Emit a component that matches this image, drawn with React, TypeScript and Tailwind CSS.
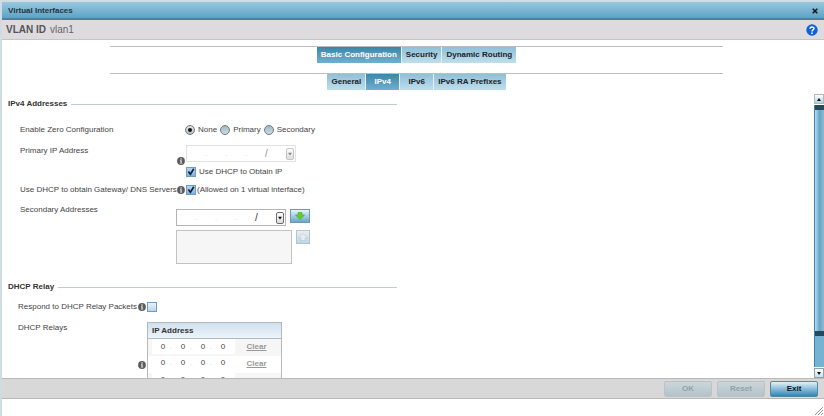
import React from 'react';

const MAIN_TABS = ['Basic Configuration', 'Security', 'Dynamic Routing'];
const SUB_TABS = ['General', 'IPv4', 'IPv6', 'IPv6 RA Prefixes'];
const ZERO_CONFIG = ['None', 'Primary', 'Secondary'];
const RELAYS = [1, 2, 3, 4];
const OCTETS = [1, 2, 3, 4];

const InfoIcon: React.FC = () => (
  <svg viewBox="0 0 8 8" className="h-2 w-2 shrink-0" aria-hidden="true">
    <circle cx="4" cy="4" r="3.9" fill="#5c5c5c" />
    <rect x="3.4" y="1.4" width="1.3" height="1.2" fill="#f4f4f4" />
    <path d="M3 3.2h1.7v2.7h.5v.7H2.9v-.7h.5v-2H3z" fill="#e4e4e4" />
  </svg>
);

interface TabBarProps {
  label: string;
  tabs: string[];
  active: string;
}

const TabBar: React.FC<TabBarProps> = ({ label, tabs, active }) => (
  <nav aria-label={label} className="flex h-[17px] justify-center border-t border-[#bdbdbd]">
    {tabs.map((tab) => (
      <button
        key={tab}
        type="button"
        className={`min-w-[34px] border-r border-[#e4f1f7] px-1 text-[8px] leading-[14px] font-bold last:border-r-0 ${
          tab === active
            ? 'bg-linear-to-b from-[#3b86a9] to-[#6fb0d0] text-white'
            : 'bg-linear-to-b from-[#8dc0d8] to-[#c0deeb] text-[#1b2327]'
        }`}
      >
        {tab}
      </button>
    ))}
  </nav>
);

interface CheckProps {
  id: string;
  checked?: boolean;
}

const Check: React.FC<CheckProps> = ({ id, checked }) => (
  <span className="relative flex h-[10px] w-[10px] shrink-0">
    <input
      id={id}
      type="checkbox"
      defaultChecked={checked}
      className="peer h-[10px] w-[10px] appearance-none border border-[#6f9cc0] bg-linear-to-b from-[#eaf3fa] to-[#b9d5ea] checked:from-[#b4d5ef] checked:to-[#7fb4e0]"
    />
    <svg
      viewBox="0 0 10 10"
      className="pointer-events-none absolute inset-0 hidden h-[10px] w-[10px] peer-checked:block"
      aria-hidden="true"
    >
      <path d="M2.4 4.6 4.4 7.2 7.8 1.8" fill="none" stroke="#15222e" strokeWidth="1.7" />
    </svg>
  </span>
);

interface IpFieldProps {
  id: string;
  label: string;
  disabled?: boolean;
}

const IpField: React.FC<IpFieldProps> = ({ id, label, disabled }) => (
  <div
    role="group"
    aria-label={label}
    className={`flex h-[17px] w-[110px] items-center border bg-white ${
      disabled ? 'border-[#e2e2e2]' : 'border-[#b4b4b4]'
    }`}
  >
    {OCTETS.map((n) => (
      <React.Fragment key={n}>
        <input
          id={n === 1 ? id : undefined}
          type="text"
          disabled={disabled}
          aria-label={`${label} octet ${n}`}
          className="w-[18px] text-center text-[8px] outline-none"
        />
        {n < 4 && <span className="w-[2px] text-[#d4d4d4]">.</span>}
      </React.Fragment>
    ))}
    <span className={`text-[10px] ${disabled ? 'text-[#8f8f8f]' : 'text-[#333]'}`}>/</span>
    <span className="relative mr-px ml-auto flex">
      <select
        disabled={disabled}
        aria-label={`${label} mask`}
        className={`h-3 w-2 appearance-none rounded-[2px] border bg-linear-to-b from-white to-[#dcdcdc] ${
          disabled ? 'border-[#c4c4c4]' : 'border-[#6b6b6b]'
        }`}
      >
        <option value="" />
        <option value="24">24</option>
      </select>
      <svg viewBox="0 0 8 12" className="pointer-events-none absolute inset-0 h-3 w-2" aria-hidden="true">
        <path d="M2 4.8h4L4 7.4z" fill={disabled ? '#8a8a8a' : '#111'} />
      </svg>
    </span>
  </div>
);

const SectionTitle: React.FC<{ children: React.ReactNode }> = ({ children }) => (
  <div className="flex h-5 items-center gap-1">
    <h2 className="font-bold text-[#333]">{children}</h2>
    <div className="h-px flex-1 bg-[#c3cccd]" />
  </div>
);

const ScrollBar: React.FC = () => (
  <div className="flex w-[10px] shrink-0 flex-col gap-px">
    <button
      type="button"
      aria-label="Scroll up"
      className="flex h-[10px] items-center justify-center border border-[#b0b7bb] bg-linear-to-b from-white to-[#a9d0e4]"
    >
      <svg viewBox="0 0 4 3" className="h-[3px] w-1">
        <path d="M0 3h4L2 0z" fill="#111" />
      </svg>
    </button>
    <div className="flex-1 border-l border-[#3f86ab] bg-[#76b3d3]">
      <div className="h-[88%] border-y-[5px] border-[#23495d] bg-linear-to-r from-[#b9dcec] via-[#62a6cb] to-[#9ab7c5]" />
    </div>
    <button
      type="button"
      aria-label="Scroll down"
      className="flex h-[10px] items-center justify-center border border-[#8fa3ae] bg-linear-to-b from-white to-[#c5e0ee]"
    >
      <svg viewBox="0 0 4 3" className="h-[3px] w-1">
        <path d="M0 0h4L2 3z" fill="#111" />
      </svg>
    </button>
  </div>
);

const Ipv4Section: React.FC = () => (
  <section>
    <SectionTitle>IPv4 Addresses</SectionTitle>
    <div className="pt-2 pl-3">
      <div role="radiogroup" aria-labelledby="zero-config" className="flex h-4 items-center">
        <span id="zero-config" className="w-[165px]">Enable Zero Configuration</span>
        <div className="flex items-center gap-[3px]">
          {ZERO_CONFIG.map((option) => (
            <label key={option} className="flex items-center gap-[3px]">
              <span className="relative flex">
                <input
                  type="radio"
                  name="zero"
                  defaultChecked={option === 'None'}
                  className="peer h-[10px] w-[10px] appearance-none rounded-full border border-[#70797f] bg-linear-to-b from-[#9fb9c8] to-[#cfdbe2] checked:from-[#e6e6e6] checked:to-[#b5babd]"
                />
                <span className="pointer-events-none absolute inset-[3px] hidden rounded-full bg-[#151515] peer-checked:block" />
              </span>
              {option}
            </label>
          ))}
        </div>
      </div>

      <div className="flex h-10 items-start pt-[5px]">
        <label htmlFor="primary-ip" className="w-[157px] leading-4">Primary IP Address</label>
        <div className="flex gap-px pt-[2px]">
          <span className="flex h-5 items-end">
            <InfoIcon />
          </span>
          <div className="flex flex-col gap-[5px]">
            <IpField id="primary-ip" label="Primary IP Address" disabled />
            <div className="flex items-center gap-[3px]">
              <Check id="dhcp-ip" checked />
              <label htmlFor="dhcp-ip">Use DHCP to Obtain IP</label>
            </div>
          </div>
        </div>
      </div>

      <div className="mt-1 flex h-4 items-center">
        <label htmlFor="dhcp-gateway" className="w-[157px] whitespace-nowrap">
          Use DHCP to obtain Gateway/ DNS Servers
        </label>
        <div className="flex items-center gap-px">
          <InfoIcon />
          <Check id="dhcp-gateway" checked />
          <label htmlFor="dhcp-gateway">(Allowed on 1 virtual interface)</label>
        </div>
      </div>

      <div className="mt-1 flex items-start">
        <label htmlFor="secondary-ip" className="w-[156px] leading-4">Secondary Addresses</label>
        <div className="flex flex-col gap-1 pt-[7px]">
          <div className="flex gap-1">
            <IpField id="secondary-ip" label="Secondary Addresses" />
            <button
              type="button"
              aria-label="Add address"
              className="flex h-[14px] w-5 items-center justify-center border border-[#7797a6] bg-linear-to-b from-[#e8f3f8] to-[#62a9cb]"
            >
              <svg viewBox="0 0 10 8" className="h-2 w-[10px]">
                <path d="M3 .5h4v2.500h2.500L5 7.500.500 3H3z" fill="#5fd01c" stroke="#3d9a1d" strokeWidth=".5" />
              </svg>
            </button>
          </div>
          <div className="flex gap-1">
            <ul aria-label="Secondary address list" className="h-[34px] w-[116px] border border-[#c2c2c2] bg-[#f6f6f6]" />
            <button
              type="button"
              disabled
              aria-label="Remove address"
              className="flex h-[14px] w-[14px] items-center justify-center border border-[#b3c6cf] bg-linear-to-b from-[#e6eff4] to-[#bdd8e6]"
            >
              <svg viewBox="0 0 10 8" className="h-2 w-[10px] shrink-0">
                <path d="M3 7.500h4V5h2.500L5 .5.500 5H3z" fill="#ececec" stroke="#b5bfc3" strokeWidth=".5" />
              </svg>
            </button>
          </div>
        </div>
      </div>
    </div>
  </section>
);

const RelaySection: React.FC = () => (
  <section className="pt-[13px]">
    <SectionTitle>DHCP Relay</SectionTitle>
    <div className="pt-[2px] pl-[10px]">
      <div className="flex h-4 items-center">
        <label htmlFor="relay" className="w-[120px] whitespace-nowrap">Respond to DHCP Relay Packets</label>
        <div className="flex items-center gap-px">
          <InfoIcon />
          <Check id="relay" />
        </div>
      </div>
      <div className="flex items-start pt-[5px]">
        <span className="w-[120px] leading-4">DHCP Relays</span>
        <div className="flex gap-px pt-[2px]">
          <span className="flex items-center">
            <InfoIcon />
          </span>
          <table className="w-[135px] table-fixed border border-[#b5b9bb]">
            <thead>
              <tr className="h-4 border-b border-[#a9bccb] bg-linear-to-b from-[#cfe0ee] to-[#eef4f9]">
                <th className="w-[87px] px-1 text-left font-bold text-[#333]">IP Address</th>
                <th />
              </tr>
            </thead>
            <tbody>
              {RELAYS.map((row) => (
                <tr key={row} className="h-[17px] odd:bg-[#f6f6f6]">
                  <td className="pl-1 align-top">
                    <div className="flex h-[15px] items-center bg-white">
                      {OCTETS.map((n) => (
                        <React.Fragment key={n}>
                          <input
                            type="text"
                            defaultValue="0"
                            aria-label={`Relay ${row} octet ${n}`}
                            className="w-[18px] pl-1 text-center text-[8px] outline-none"
                          />
                          {n < 4 && <span className="w-[2px] text-[#d4d4d4]">.</span>}
                        </React.Fragment>
                      ))}
                    </div>
                  </td>
                  <td className="pl-3">
                    <a href="#clear" className="font-bold text-[#999] underline">Clear</a>
                  </td>
                </tr>
              ))}
            </tbody>
          </table>
        </div>
      </div>
    </div>
  </section>
);

const App: React.FC = () => {
  return (
    <div className="flex h-screen flex-col border-t-2 border-l-2 border-[#cfdce4] bg-white font-['Liberation_Sans',Arial,sans-serif] text-[8px] leading-[10px] text-[#444]">
      <header>
        <div className="flex h-[18px] items-center justify-between border-b-2 border-[#4583a0] bg-linear-to-b from-[#98c7df] to-[#5ba3c6] px-[6px] pt-px">
          <h1 className="font-bold text-[#26333a]">Virtual Interfaces</h1>
          <button type="button" aria-label="Close">
            <svg viewBox="0 0 6 6" className="h-[6px] w-[6px]">
              <path d="M.7.7l4.600 4.600M5.300.7L.7 5.300" stroke="#10181c" strokeWidth="1.600" />
            </svg>
          </button>
        </div>
        <div className="flex h-5 items-center justify-between border-b border-[#c5c5c5] bg-[#dddbde] pr-[6px] pl-1 text-[10px]">
          <p className="flex gap-1">
            <span className="font-bold text-[#555]">VLAN ID</span>
            <span className="text-[#666]">vlan1</span>
          </p>
          <button type="button" aria-label="Help">
            <svg viewBox="0 0 12 12" className="h-3 w-3">
              <circle cx="6" cy="6" r="5.700" fill="#0a62dc" />
              <path d="M4 4.700C4 2.400 8 2.400 8 4.600 8 6 6 5.900 6 7.500" fill="none" stroke="#fff" strokeWidth="1.500" />
              <circle cx="6" cy="9.200" r=".9" fill="#fff" />
            </svg>
          </button>
        </div>
      </header>

      <div className="mr-[101px] ml-27 flex flex-col gap-[10px] pt-[6px] pb-1">
        <TabBar label="Sections" tabs={MAIN_TABS} active="Basic Configuration" />
        <TabBar label="Basic configuration" tabs={SUB_TABS} active="IPv4" />
      </div>

      <div className="flex min-h-0 flex-1">
        <main className="min-w-0 flex-1 overflow-hidden pl-[6px]">
          <div className="max-w-[389px]">
            <Ipv4Section />
            <RelaySection />
          </div>
        </main>
        <ScrollBar />
      </div>

      <footer>
        <div className="flex h-[21px] items-center justify-end gap-[5px] border-y border-[#b9b9b9] bg-[#d8d8d8] pr-[6px] font-bold">
          <button type="button" disabled className="h-4 w-12 rounded-xs border border-[#b9c3c7] bg-linear-to-b from-[#cbd6da] to-[#b3c3c9] text-[#93a0a5]">
            OK
          </button>
          <button type="button" disabled className="h-4 w-12 rounded-xs border border-[#b9c3c7] bg-linear-to-b from-[#cbd6da] to-[#b3c3c9] text-[#93a0a5]">
            Reset
          </button>
          <button type="button" className="h-4 w-12 rounded-xs border border-[#4f8ba6] bg-linear-to-b from-[#e2f2f8] to-[#2487b3] text-[#0b1418]">
            Exit
          </button>
        </div>
        <div className="flex h-[17px] items-end justify-end p-px">
          <svg viewBox="0 0 8 8" className="h-2 w-2" aria-hidden="true">
            <path d="M0 8 8 0M3 8l5-5M6 8l2-2" stroke="#8a8a8a" strokeWidth=".9" />
          </svg>
        </div>
      </footer>
    </div>
  );
};

export default App;
